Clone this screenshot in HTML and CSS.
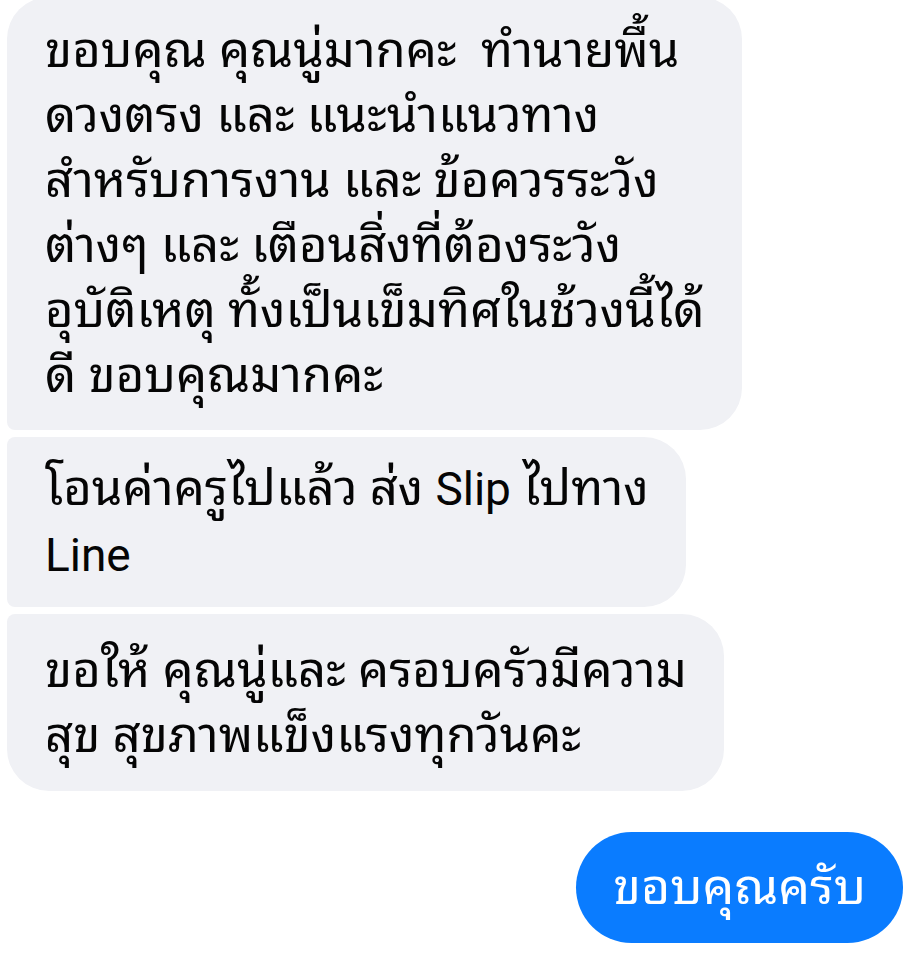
FILE: index.html
```html
<!DOCTYPE html>
<html>
<head>
    <meta charset="utf-8">
    <link rel="stylesheet" href="styles.css">
</head>
<body>
    <div class="chat">

        <div class="group incoming">
            <div class="bubble first">ขอบคุณ คุณนู่มากคะ&nbsp; ทำนายพื้น<br>ดวงตรง และ แนะนำแนวทาง<br>สำหรับการงาน และ ข้อควรระวัง<br>ต่างๆ และ เตือนสิ่งที่ต้องระวัง<br>อุบัติเหตุ ทั้งเป็นเข็มทิศในช้วงนี้ได้<br>ดี ขอบคุณมากคะ</div>
            <div class="bubble middle">โอนค่าครูไปแล้ว ส่ง <span class="latin">Slip</span> ไปทาง<br><span class="latin">Line</span></div>
            <div class="bubble last">ขอให้ คุณนู่และ ครอบครัวมีความ<br>สุข สุขภาพแข็งแรงทุกวันคะ</div>
        </div>

        <div class="group outgoing">
            <div class="bubble single">ขอบคุณครับ</div>
        </div>

    </div>
</body>
</html>
```

FILE: styles.css
```css
body{
    margin: 0;
    background-color: white;
    font-family: Roboto, "Noto Sans Thai Looped", "Noto Sans Thai", sans-serif;
    font-size: 49px;
    color: #050505;
}

.chat{
    margin-top: -3px;
    padding: 0 21px 0 7px;
}

.group{
    display: flex;
    flex-direction: column;
    gap: 7px;
}

.incoming{
    align-items: flex-start;
}

.outgoing{
    align-items: flex-end;
    margin-top: 41px;
}

.bubble{
    line-height: 65px;
    padding: 21px 37px 22px 38px;
    background-color: #f0f1f5;
    border-radius: 42px;
}

.latin{
    font-size: 46px;
}

.incoming .first{
    border-bottom-left-radius: 8px;
}
.incoming .middle{
    padding-top: 19px;
    padding-bottom: 19px;
    border-top-left-radius: 8px;
    border-bottom-left-radius: 8px;
}
.incoming .last{
    padding-top: 24px;
    padding-bottom: 23px;
    border-top-left-radius: 8px;
}

.outgoing .single{
    background-color: #0a7cff;
    color: white;
    font-size: 50px;
    line-height: 64px;
    border-radius: 56px;
    padding: 23px 37px 24px 37px;
}
```
